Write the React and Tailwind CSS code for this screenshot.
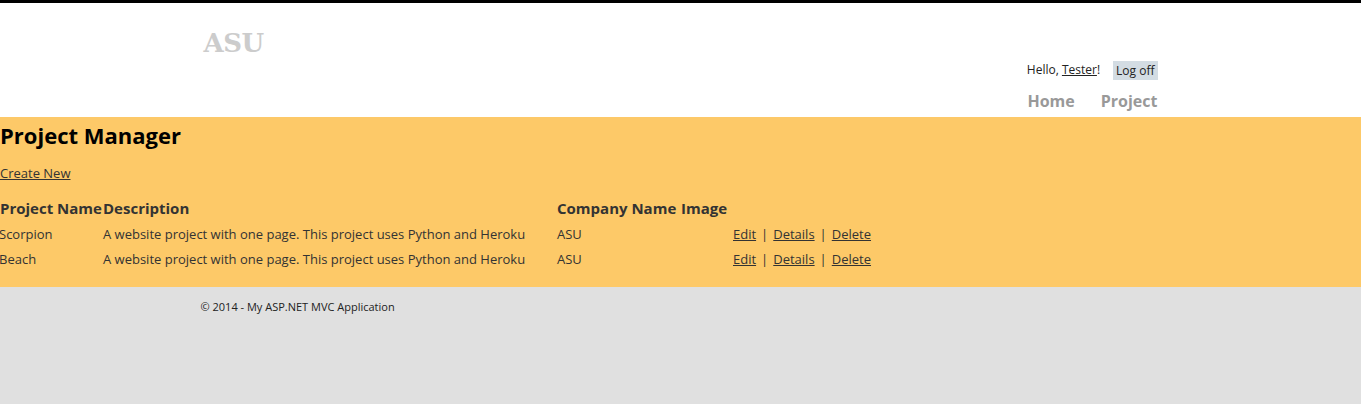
export default function App() {
  const projects = [
    { name: "Scorpion", description: "A website project with one page. This project uses Python and Heroku", company: "ASU" },
    { name: "Beach", description: "A website project with one page. This project uses Python and Heroku", company: "ASU" },
  ];

  return (
    <div className="min-h-[404px] flex flex-col bg-[#e0e0e0] font-['Segoe_UI','Open_Sans',sans-serif] text-[#333]">
      {/* header */}
      <header className="bg-white border-t-[3px] border-black h-[117px] flex">
        <div className="w-[960px] mx-auto flex justify-between pl-[3px] pr-[3px]">
          <div className="pt-[23px] font-['DejaVu_Serif',serif] font-bold text-[26px] leading-[34px] text-[#cccccc] tracking-[-0.5px]">
            ASU
          </div>
          <div className="flex flex-col items-end pt-[57px]">
            <div className="flex items-center text-[12px] text-[#222] h-[20px]">
              <span className="mr-[13px]">
                Hello, <a className="underline">Tester</a>!
              </span>
              <span className="bg-[#d3dce3] px-[3px] h-[19px] leading-[19px]">Log off</span>
            </div>
            <nav className="flex gap-[26px] text-[16px] font-bold text-[#999] mt-[9px] leading-[24px]">
              <a>Home</a>
              <a>Project</a>
            </nav>
          </div>
        </div>
      </header>

      {/* main */}
      <main className="bg-[#fdc968] h-[170px] text-black">
        <h2 className="text-[22px] font-bold leading-[36px]">Project Manager</h2>
        <p className="text-[13px] mt-[11px] leading-[18px]">
          <a className="underline text-[#333]">Create New</a>
        </p>
        <div className="grid grid-cols-[103px_454px_124px_52px_auto] text-[#333] mt-[14px]">
          <div className="text-[15px] font-bold leading-[24px] pb-[2px] whitespace-nowrap">Project Name</div>
          <div className="text-[15px] font-bold leading-[24px] pb-[2px]">Description</div>
          <div className="text-[15px] font-bold leading-[24px] pb-[2px] whitespace-nowrap">Company Name</div>
          <div className="text-[15px] font-bold leading-[24px] pb-[2px]">Image</div>
          <div></div>
          {projects.map((p) => (
            <div key={p.name} className="contents">
              <div className="text-[13px] leading-[25px] -ml-[1px]">{p.name}</div>
              <div className="text-[13px] leading-[25px] whitespace-nowrap">{p.description}</div>
              <div className="text-[13px] leading-[25px]">{p.company}</div>
              <div></div>
              <div className="text-[13px] leading-[25px] whitespace-nowrap">
                <a className="underline">Edit</a>
                <span className="mx-[5px]">|</span>
                <a className="underline">Details</a>
                <span className="mx-[5px]">|</span>
                <a className="underline">Delete</a>
              </div>
            </div>
          ))}
        </div>
      </main>

      {/* footer */}
      <footer className="flex-1">
        <div className="w-[960px] mx-auto pt-[12px] text-[11px] text-[#222]">
          © 2014 - My ASP.NET MVC Application
        </div>
      </footer>
    </div>
  );
}
